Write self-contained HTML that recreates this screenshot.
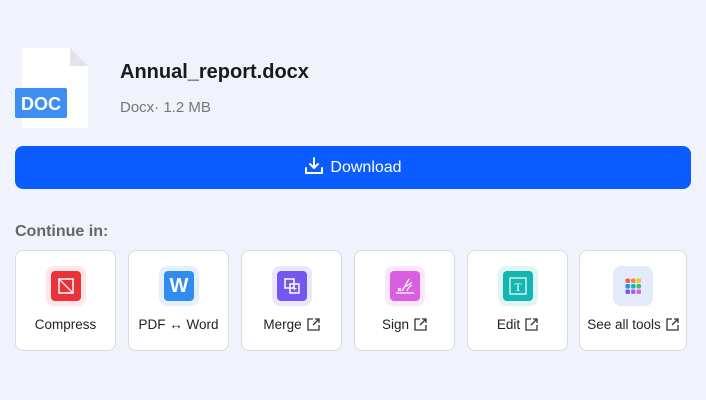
<!DOCTYPE html>
<html><head><style>
*{box-sizing:border-box;margin:0;padding:0}
body{width:706px;height:400px;background:#f0f2fc;font-family:"Liberation Sans",sans-serif;position:relative;overflow:hidden}
.abs{position:absolute}
.card{position:absolute;top:250px;width:101px;height:101px;background:#fff;border:1px solid #d9dbe3;border-radius:8px}
.ib{position:absolute;left:30px;top:15px;width:40px;height:40px;border-radius:8px}
.ic{position:absolute;left:5px;top:5px;width:30px;height:30px;border-radius:4px}
.lbl{position:absolute;left:0;right:0;top:66px;text-align:center;font-size:13.5px;color:#222;white-space:nowrap}
.ext{display:inline-block;vertical-align:-2px;margin-left:5px}
</style></head><body>
<svg class="abs" style="left:15px;top:47px" width="75" height="83">
<path d="M7 1 H55 L73 19 V81 H7 Z" fill="#fff"/>
<path d="M55 1 L73 19 H55 Z" fill="#e2e4e8"/>
<rect x="0" y="41" width="52" height="30" rx="2" fill="#3d8ef0"/>
<text x="26" y="63" text-anchor="middle" font-family="Liberation Sans" font-weight="bold" font-size="18" fill="#fff">DOC</text>
</svg>
<div class="abs" style="left:120px;top:61px;font-size:20px;font-weight:bold;color:#1a1a1a">Annual_report.docx</div>
<div class="abs" style="left:120px;top:99px;font-size:15px;color:#777">Docx· 1.2 MB</div>
<div class="abs" style="left:15px;top:146px;width:676px;height:43px;background:#0a5cff;border-radius:8px;color:#fff;font-size:16px;text-align:center;line-height:43px">
<svg width="20" height="20" viewBox="0 0 20 20" style="vertical-align:-4px;margin-right:6px"><path d="M10 2v10M6 8l4 4 4-4M2 12v5h16v-5" fill="none" stroke="#fff" stroke-width="2" stroke-linecap="round" stroke-linejoin="round"/></svg>Download</div>
<div class="abs" style="left:15px;top:223px;font-size:16px;font-weight:bold;color:#666">Continue in:</div>

<div class="card" style="left:15px"><div class="ib" style="background:#fde6e8"><div class="ic" style="background:#e8333b"><svg width="30" height="30"><rect x="8" y="8" width="14" height="14" fill="none" stroke="#fff" stroke-width="1.5"/><path d="M8 8l14 14" stroke="#fff" stroke-width="1.2"/></svg></div></div><div class="lbl">Compress</div></div>

<div class="card" style="left:128px"><div class="ib" style="background:#e3f0fc"><div class="ic" style="background:#2f8cf0;color:#fff;font-weight:bold;font-size:20px;text-align:center;line-height:30px">W</div></div><div class="lbl">PDF ↔ Word</div></div>

<div class="card" style="left:241px"><div class="ib" style="background:#ece8fb"><div class="ic" style="background:#7457f0"><svg width="30" height="30"><rect x="8" y="8" width="9" height="9" fill="none" stroke="#fff" stroke-width="1.5"/><rect x="13" y="13" width="9" height="9" fill="none" stroke="#fff" stroke-width="1.5"/><path d="M17.5 15.5v4M15.5 17.5h4" stroke="#fff"/></svg></div></div><div class="lbl">Merge<svg class="ext" width="13" height="13"><path d="M6 1H1v11h11V7M8 1h4v4M12 1L6 7" fill="none" stroke="#333" stroke-width="1.3"/></svg></div></div>

<div class="card" style="left:354px"><div class="ib" style="background:#fbe6fb"><div class="ic" style="background:#d95fe0"><svg width="30" height="30"><path d="M6 22h18M8 17l3 3M11 17l-3 3M12 20c3-4 5-9 7-12M14 16c3-1 6-3 8-5M17 20c1-3 3-5 5-6" fill="none" stroke="#fff" stroke-width="1.2"/></svg></div></div><div class="lbl">Sign<svg class="ext" width="13" height="13"><path d="M6 1H1v11h11V7M8 1h4v4M12 1L6 7" fill="none" stroke="#333" stroke-width="1.3"/></svg></div></div>

<div class="card" style="left:467px"><div class="ib" style="background:#e0f6f4"><div class="ic" style="background:#13b6b0"><svg width="30" height="30"><rect x="7" y="7" width="16" height="16" fill="none" stroke="#fff" stroke-width="1.2"/><text x="15" y="20" text-anchor="middle" font-family="Liberation Serif" font-size="12" fill="#fff">T</text></svg></div></div><div class="lbl">Edit<svg class="ext" width="13" height="13"><path d="M6 1H1v11h11V7M8 1h4v4M12 1L6 7" fill="none" stroke="#333" stroke-width="1.3"/></svg></div></div>

<div class="card" style="left:579px;width:108px"><div class="ib" style="left:33px;background:#e3eafa"><svg width="40" height="40" style="position:absolute;left:0;top:0">
<rect x="12.5" y="12.5" width="4.5" height="4.5" rx="1.5" fill="#f55a4e"/><rect x="18" y="12.5" width="4.5" height="4.5" rx="1.5" fill="#f78a3a"/><rect x="23.5" y="12.5" width="4.5" height="4.5" rx="1.5" fill="#f5c230"/>
<rect x="12.5" y="18" width="4.5" height="4.5" rx="1.5" fill="#2f8cf0"/><rect x="18" y="18" width="4.5" height="4.5" rx="1.5" fill="#13b6b0"/><rect x="23.5" y="18" width="4.5" height="4.5" rx="1.5" fill="#3cc06a"/>
<rect x="12.5" y="23.5" width="4.5" height="4.5" rx="1.5" fill="#7457f0"/><rect x="18" y="23.5" width="4.5" height="4.5" rx="1.5" fill="#a45ff0"/><rect x="23.5" y="23.5" width="4.5" height="4.5" rx="1.5" fill="#d95fe0"/></svg></div><div class="lbl">See all tools<svg class="ext" width="13" height="13"><path d="M6 1H1v11h11V7M8 1h4v4M12 1L6 7" fill="none" stroke="#333" stroke-width="1.3"/></svg></div></div>
</body></html>
